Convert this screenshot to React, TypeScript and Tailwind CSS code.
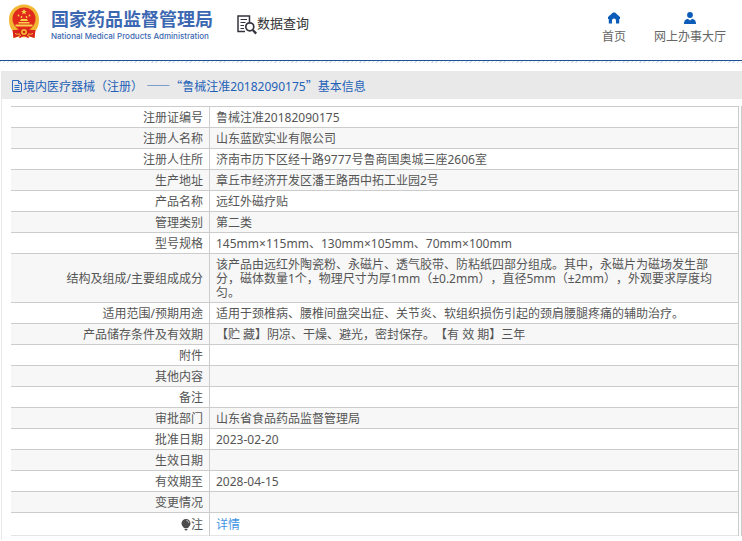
import React from "react";

interface DetailRow {
  label: string;
  value: string;
}

const rows: DetailRow[] = [
  { label: "注册证编号", value: "鲁械注准20182090175" },
  { label: "注册人名称", value: "山东蓝欧实业有限公司" },
  { label: "注册人住所", value: "济南市历下区经十路9777号鲁商国奥城三座2606室" },
  { label: "生产地址", value: "章丘市经济开发区潘王路西中拓工业园2号" },
  { label: "产品名称", value: "远红外磁疗贴" },
  { label: "管理类别", value: "第二类" },
  { label: "型号规格", value: "145mm×115mm、130mm×105mm、70mm×100mm" },
  {
    label: "结构及组成/主要组成成分",
    value:
      "该产品由远红外陶瓷粉、永磁片、透气胶带、防粘纸四部分组成。其中，永磁片为磁场发生部分，磁体数量1个，物理尺寸为厚1mm（±0.2mm），直径5mm（±2mm），外观要求厚度均匀。",
  },
  {
    label: "适用范围/预期用途",
    value: "适用于颈椎病、腰椎间盘突出症、关节炎、软组织损伤引起的颈肩腰腿疼痛的辅助治疗。",
  },
  {
    label: "产品储存条件及有效期",
    value: "【贮 藏】阴凉、干燥、避光，密封保存。【有 效 期】三年",
  },
  { label: "附件", value: "" },
  { label: "其他内容", value: "" },
  { label: "备注", value: "" },
  { label: "审批部门", value: "山东省食品药品监督管理局" },
  { label: "批准日期", value: "2023-02-20" },
  { label: "生效日期", value: "" },
  { label: "有效期至", value: "2028-04-15" },
  { label: "变更情况", value: "" },
];

const Emblem: React.FC = () => (
  <svg className="w-8 h-9 shrink-0" viewBox="0 0 32 36" aria-hidden="true">
    <path
      d="M16 .5C7.500.5 1 7 1 15.500c0 5.500 1.500 9.500 4.500 12.500L5 34l6-1.500 5 1 5-1 6 1.500-.5-6c3-3 4.500-7 4.500-12.500C31 7 24.500.5 16 .5z"
      fill="#f2b632"
    />
    <circle cx="16" cy="15" r="11.500" fill="#e0281c" />
    <path
      d="M16 5l.8 1.800 2 .2-1.500 1.300.5 2L16 9.300l-1.800 1 .5-2L13.200 7l2-.2z"
      fill="#fbd04a"
    />
    <g fill="#fbd04a">
      <circle cx="10.500" cy="11.500" r=".9" />
      <circle cx="13.500" cy="13" r=".9" />
      <circle cx="18.500" cy="13" r=".9" />
      <circle cx="21.500" cy="11.500" r=".9" />
      <path d="M12 17l1-2h6l1 2zM10.500 18h11v1.500h-11zM7.500 20.500h17v2h-17z" />
    </g>
    <path d="M4.500 26c3 .2 5.500-.2 8-1.500l3.500 1 3.500-1c2.500 1.300 5 1.700 8 1.500l-1 8-4.500-1.500-2 1.500-4-2-4 2-2-1.500L5.500 34z" fill="#d8221a" />
    <circle cx="16" cy="28" r="3" fill="#f2b632" />
    <circle cx="16" cy="28" r="1.300" fill="#d8221a" />
    <path d="M7 29.500c2 1 3.500 1 5 .3M25 29.500c-2 1-3.500 1-5 .3M10 33l3-2M22 33l-3-2" stroke="#f6c440" strokeWidth="1" fill="none" />
  </svg>
);

const SearchDocIcon: React.FC = () => (
  <svg className="w-5 h-5 shrink-0" viewBox="0 0 20 20" fill="none" stroke="#34343f" aria-hidden="true">
    <path d="M12.500 7V1H1v15.500h7" strokeWidth="1.500" />
    <path d="M3.500 4.500H10M3.500 7.500H8.500M3.500 10.500H7M3.500 13.500H7" strokeWidth="1.200" />
    <circle cx="12.800" cy="11.800" r="4" strokeWidth="1.700" />
    <path d="M15.800 15l3.400 3.600" strokeWidth="2.300" />
  </svg>
);

const HomeIcon: React.FC = () => (
  <svg className="w-3 h-3" viewBox="0 0 12 12" fill="#0b5cb8" aria-hidden="true">
    <path d="M5 .5h2L12 5v2h-.8v4.500H8V8.500a2 2 0 0 0-4 0v3H.8V7H0V5z" />
  </svg>
);

const UserIcon: React.FC = () => (
  <svg className="w-3 h-3" viewBox="0 0 12 12" fill="#0b5cb8" aria-hidden="true">
    <ellipse cx="6" cy="3" rx="2.900" ry="3" />
    <path d="M0 12c0-3 1-4.600 3.800-5.200L6 8.500l2.200-1.700C11 7.400 12 9 12 12z" />
  </svg>
);

const FileIcon: React.FC = () => (
  <svg className="w-3 h-3 shrink-0" viewBox="0 0 12 12" fill="none" stroke="#2a6abf" aria-hidden="true">
    <path d="M1.500.5h6l3 3v8h-9zM7.500.5v3h3M3.500 5.500h5M3.500 7.500h5M3.500 9.500h5" />
  </svg>
);

const BulbIcon: React.FC = () => (
  <svg className="w-2.5 h-3" viewBox="0 0 10 12" aria-hidden="true">
    <path d="M5 0a4.500 4.500 0 0 0-4.500 4.500c0 2 1.500 3 2.500 4.500h4c1-1.500 2.500-2.500 2.500-4.500A4.500 4.500 0 0 0 5 0zM3.500 9.800h3v.8L5.500 11.500h-1l-1-.9z" fill="#4c4c4c" />
    <path d="M5.500 1.500c1.300.2 2.200 1.100 2.400 2.400" stroke="#ddd" strokeWidth=".9" fill="none" />
  </svg>
);

const Header: React.FC = () => (
  <header className="bg-white">
    <div className="flex justify-between h-15 pl-2 pr-4">
      <div className="flex items-start">
        <div className="flex items-start gap-[11px] pt-1">
          <Emblem />
          <div className="flex flex-col pt-[3px] text-[#3c68b2]">
            <span className="text-[18px] leading-6 font-bold whitespace-nowrap">国家药品监督管理局</span>
            <span className="font-['Inter','Liberation_Sans',sans-serif] text-[8px] leading-[10px] font-medium whitespace-nowrap">
              National Medical Products Administration
            </span>
          </div>
        </div>
        <div className="flex items-start pt-[15px] ml-6">
          <SearchDocIcon />
          <h1 className="text-[13px] leading-4 text-[#333]">数据查询</h1>
        </div>
      </div>
      <nav className="flex items-start gap-7 pt-3 text-[12px] leading-4 text-[#666]">
        <a href="#home" className="flex flex-col items-center gap-[5px]">
          <HomeIcon />
          首页
        </a>
        <a href="#hall" className="flex flex-col items-center gap-[5px]">
          <UserIcon />
          网上办事大厅
        </a>
      </nav>
    </div>
    <div className="h-px bg-[#1d4f91]" />
    <div className="h-0.5 bg-[repeating-linear-gradient(135deg,#d3e2f0_0px,#d3e2f0_1px,#ffffff_1px,#ffffff_3px)]" />
  </header>
);

// full-width dashes and quotes only exist in the CJK face
const Wide: React.FC<{ children: React.ReactNode }> = ({ children }) => (
  <span className="font-['Noto_Sans_CJK_SC',sans-serif]">{children}</span>
);

const labelClass = "w-[199px] border-r border-[#ccc] pt-1 pb-0.5 pr-1.5 text-right font-normal";
const valueClass = "pl-1.5 pr-4 pt-1 pb-0.5";

const App: React.FC = () => {
  return (
    <div
      className="min-h-screen bg-white font-['Noto_Sans','Noto_Sans_CJK_SC',sans-serif] [text-spacing-trim:space-all]"
      lang="zh-CN"
    >
      <Header />
      <main className="mt-2 ml-px border-l border-[#e8e8e8] pb-1">
        <h2 className="flex items-center h-7 pl-[9px] pt-0.5 bg-[#e9e9e9] text-[12px] leading-4 font-normal text-[#1f62b8]">
          <FileIcon />
          <span>
            境内医疗器械（注册） <Wide>——“</Wide>鲁械注准20182090175<Wide>”</Wide>基本信息
          </span>
        </h2>
        <div className="mt-[7px] ml-[9px] border-r border-[#ccc] pr-0.5">
          <table className="w-full table-fixed border-separate border-spacing-0 border-t border-r border-[#ccc] text-[12px] leading-[14px] text-[#555]">
            <tbody>
              {rows.map((row) => (
                <tr key={row.label} className="even:bg-[#f7f7f7] *:border-b">
                  <th scope="row" className={labelClass}>
                    {row.label}
                  </th>
                  <td className={`${valueClass} border-[#ccc]`}>{row.value}</td>
                </tr>
              ))}
              <tr className="*:border-b *:border-b-[#e5e5e5]">
                <th scope="row" className={labelClass}>
                  <span className="flex items-center justify-end h-4">
                    <BulbIcon />注
                  </span>
                </th>
                <td className={valueClass}>
                  <a href="#detail" className="text-[#3f94e4]">
                    详情
                  </a>
                </td>
              </tr>
            </tbody>
          </table>
        </div>
      </main>
    </div>
  );
};

export default App;
